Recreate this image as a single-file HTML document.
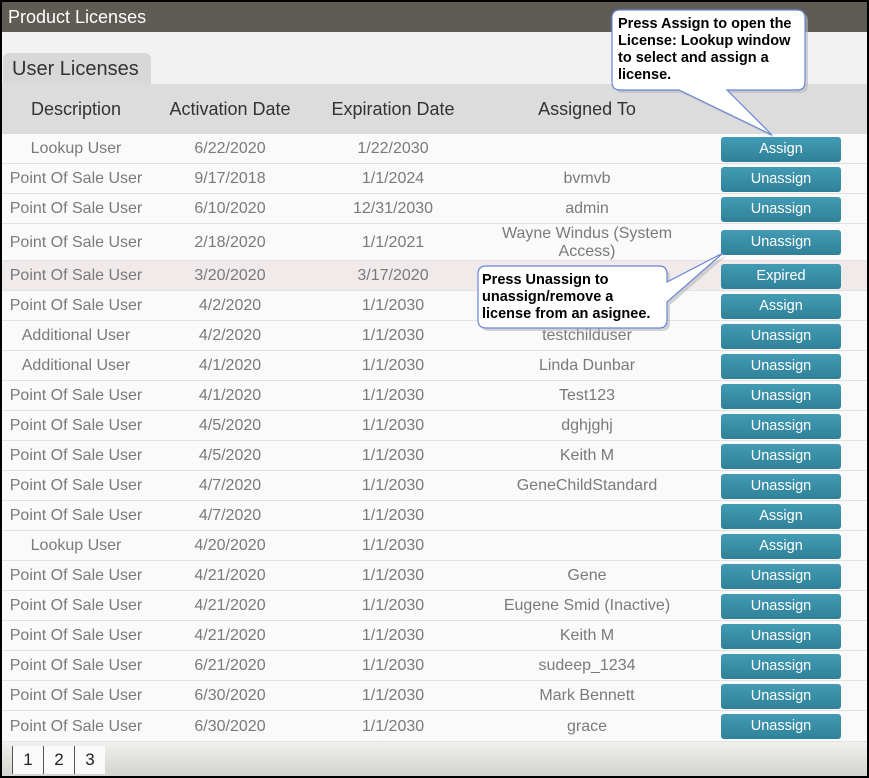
<!DOCTYPE html>
<html><head><meta charset="utf-8"><style>
*{margin:0;padding:0;box-sizing:border-box}
body{width:869px;height:778px;background:#000;font-family:"Liberation Sans",Arial,sans-serif;position:relative;overflow:hidden}
#frame{position:absolute;left:2px;top:2px;width:865px;height:774px;background:#f3f2f2}
#hdr{position:absolute;left:0;top:0;width:865px;height:30px;background:#5f5b55;color:#fff;font-size:18px;line-height:30px;padding-left:6px}
#tab{position:absolute;left:1px;top:51px;width:148px;height:32px;background:#d9d8d8;border-radius:6px 6px 0 0;font-size:20px;color:#333;line-height:33px;padding-left:9px}
#th{position:absolute;left:0;top:82px;width:865px;height:50px;background:#dcdcdc}
.c{position:absolute;text-align:center}
#th .c{top:0;line-height:50px;font-size:18px;color:#333}
.row{position:absolute;left:0;width:865px;background:#fafafa;border-bottom:1px solid #e2e2e2;font-size:16px;color:#7a7a7a}
.row .c{top:1px;bottom:0;display:flex;align-items:center;justify-content:center;line-height:18px}
.d{left:0;width:148px}.a{left:150px;width:156px}.e{left:312px;width:158px}.t{left:485px;width:200px}
.b{position:absolute;left:719px;width:120px;height:25px;border-radius:3px;background:linear-gradient(#429bb4,#2f8199);color:#fff;font-size:14.5px;line-height:25px;text-align:center}
#pg{position:absolute;left:0;top:740px;width:865px;height:34px;background:linear-gradient(#f0f0ec,#d4d3ce)}
.p{position:absolute;top:4px;width:31px;height:28px;background:#fafafa;border-left:1px solid #555;font-size:17px;color:#222;text-align:center;line-height:28px}
svg{position:absolute;left:0;top:0}
</style></head><body><div id="frame">
<div id="hdr">Product Licenses</div>
<div id="tab">User Licenses</div>
<div id="th"><div class="c d">Description</div><div class="c a">Activation Date</div><div class="c e">Expiration Date</div><div class="c t">Assigned To</div></div>

<div class="row" style="top:132px;height:30px"><div class="c d">Lookup User</div><div class="c a">6/22/2020</div><div class="c e">1/22/2030</div><div class="c t"></div><div class="b" style="top:3px">Assign</div></div>
<div class="row" style="top:162px;height:30px"><div class="c d">Point Of Sale User</div><div class="c a">9/17/2018</div><div class="c e">1/1/2024</div><div class="c t">bvmvb</div><div class="b" style="top:3px">Unassign</div></div>
<div class="row" style="top:192px;height:30px"><div class="c d">Point Of Sale User</div><div class="c a">6/10/2020</div><div class="c e">12/31/2030</div><div class="c t">admin</div><div class="b" style="top:3px">Unassign</div></div>
<div class="row" style="top:222px;height:37px"><div class="c d">Point Of Sale User</div><div class="c a">2/18/2020</div><div class="c e">1/1/2021</div><div class="c t">Wayne Windus (System<br>Access)</div><div class="b" style="top:6px">Unassign</div></div>
<div class="row" style="top:259px;height:30px;background:#f0eaea"><div class="c d">Point Of Sale User</div><div class="c a">3/20/2020</div><div class="c e">3/17/2020</div><div class="c t"></div><div class="b" style="top:3px">Expired</div></div>
<div class="row" style="top:289px;height:30px"><div class="c d">Point Of Sale User</div><div class="c a">4/2/2020</div><div class="c e">1/1/2030</div><div class="c t"></div><div class="b" style="top:3px">Assign</div></div>
<div class="row" style="top:319px;height:30px"><div class="c d">Additional User</div><div class="c a">4/2/2020</div><div class="c e">1/1/2030</div><div class="c t">testchilduser</div><div class="b" style="top:3px">Unassign</div></div>
<div class="row" style="top:349px;height:30px"><div class="c d">Additional User</div><div class="c a">4/1/2020</div><div class="c e">1/1/2030</div><div class="c t">Linda Dunbar</div><div class="b" style="top:3px">Unassign</div></div>
<div class="row" style="top:379px;height:30px"><div class="c d">Point Of Sale User</div><div class="c a">4/1/2020</div><div class="c e">1/1/2030</div><div class="c t">Test123</div><div class="b" style="top:3px">Unassign</div></div>
<div class="row" style="top:409px;height:30px"><div class="c d">Point Of Sale User</div><div class="c a">4/5/2020</div><div class="c e">1/1/2030</div><div class="c t">dghjghj</div><div class="b" style="top:3px">Unassign</div></div>
<div class="row" style="top:439px;height:30px"><div class="c d">Point Of Sale User</div><div class="c a">4/5/2020</div><div class="c e">1/1/2030</div><div class="c t">Keith M</div><div class="b" style="top:3px">Unassign</div></div>
<div class="row" style="top:469px;height:30px"><div class="c d">Point Of Sale User</div><div class="c a">4/7/2020</div><div class="c e">1/1/2030</div><div class="c t">GeneChildStandard</div><div class="b" style="top:3px">Unassign</div></div>
<div class="row" style="top:499px;height:30px"><div class="c d">Point Of Sale User</div><div class="c a">4/7/2020</div><div class="c e">1/1/2030</div><div class="c t"></div><div class="b" style="top:3px">Assign</div></div>
<div class="row" style="top:529px;height:30px"><div class="c d">Lookup User</div><div class="c a">4/20/2020</div><div class="c e">1/1/2030</div><div class="c t"></div><div class="b" style="top:3px">Assign</div></div>
<div class="row" style="top:559px;height:30px"><div class="c d">Point Of Sale User</div><div class="c a">4/21/2020</div><div class="c e">1/1/2030</div><div class="c t">Gene</div><div class="b" style="top:3px">Unassign</div></div>
<div class="row" style="top:589px;height:30px"><div class="c d">Point Of Sale User</div><div class="c a">4/21/2020</div><div class="c e">1/1/2030</div><div class="c t">Eugene Smid (Inactive)</div><div class="b" style="top:3px">Unassign</div></div>
<div class="row" style="top:619px;height:30px"><div class="c d">Point Of Sale User</div><div class="c a">4/21/2020</div><div class="c e">1/1/2030</div><div class="c t">Keith M</div><div class="b" style="top:3px">Unassign</div></div>
<div class="row" style="top:649px;height:30px"><div class="c d">Point Of Sale User</div><div class="c a">6/21/2020</div><div class="c e">1/1/2030</div><div class="c t">sudeep_1234</div><div class="b" style="top:3px">Unassign</div></div>
<div class="row" style="top:679px;height:30px"><div class="c d">Point Of Sale User</div><div class="c a">6/30/2020</div><div class="c e">1/1/2030</div><div class="c t">Mark Bennett</div><div class="b" style="top:3px">Unassign</div></div>
<div class="row" style="top:709px;height:31px"><div class="c d">Point Of Sale User</div><div class="c a">6/30/2020</div><div class="c e">1/1/2030</div><div class="c t">grace</div><div class="b" style="top:3px">Unassign</div></div>

<div id="pg"><div class="p" style="left:10px">1</div><div class="p" style="left:41px">2</div><div class="p" style="left:72px">3</div></div>
</div>
<svg width="869" height="778" viewBox="0 0 869 778">
<g transform="translate(3,3)" fill="#b8b8b8" opacity="0.6">
<path d="M620,10 H797 Q805,10 805,18 V82 Q805,90 797,90 H727 L772,135 L679,90 H620 Q612,90 612,82 V18 Q612,10 620,10 Z"/>
<path d="M486,266 H659 Q667,266 667,274 V282 L723,253 L667,302 V320 Q667,328 659,328 H486 Q478,328 478,320 V274 Q478,266 486,266 Z"/>
</g>
<path d="M620,10 H797 Q805,10 805,18 V82 Q805,90 797,90 H727 L772,135 L679,90 H620 Q612,90 612,82 V18 Q612,10 620,10 Z" fill="#fff" stroke="#6a86d8" stroke-width="1.2"/>
<path d="M486,266 H659 Q667,266 667,274 V282 L723,253 L667,302 V320 Q667,328 659,328 H486 Q478,328 478,320 V274 Q478,266 486,266 Z" fill="#fff" stroke="#6a86d8" stroke-width="1.2"/>
<g font-family="Liberation Sans,Arial,sans-serif" font-weight="bold" font-size="14.5" fill="#000">
<text x="618" y="28">Press Assign to open the</text>
<text x="618" y="45">License: Lookup window</text>
<text x="618" y="62">to select and assign a</text>
<text x="618" y="79">license.</text>
<text x="482" y="284">Press Unassign to</text>
<text x="482" y="301">unassign/remove a</text>
<text x="482" y="318">license from an asignee.</text>
</g>
</svg>
</body></html>
